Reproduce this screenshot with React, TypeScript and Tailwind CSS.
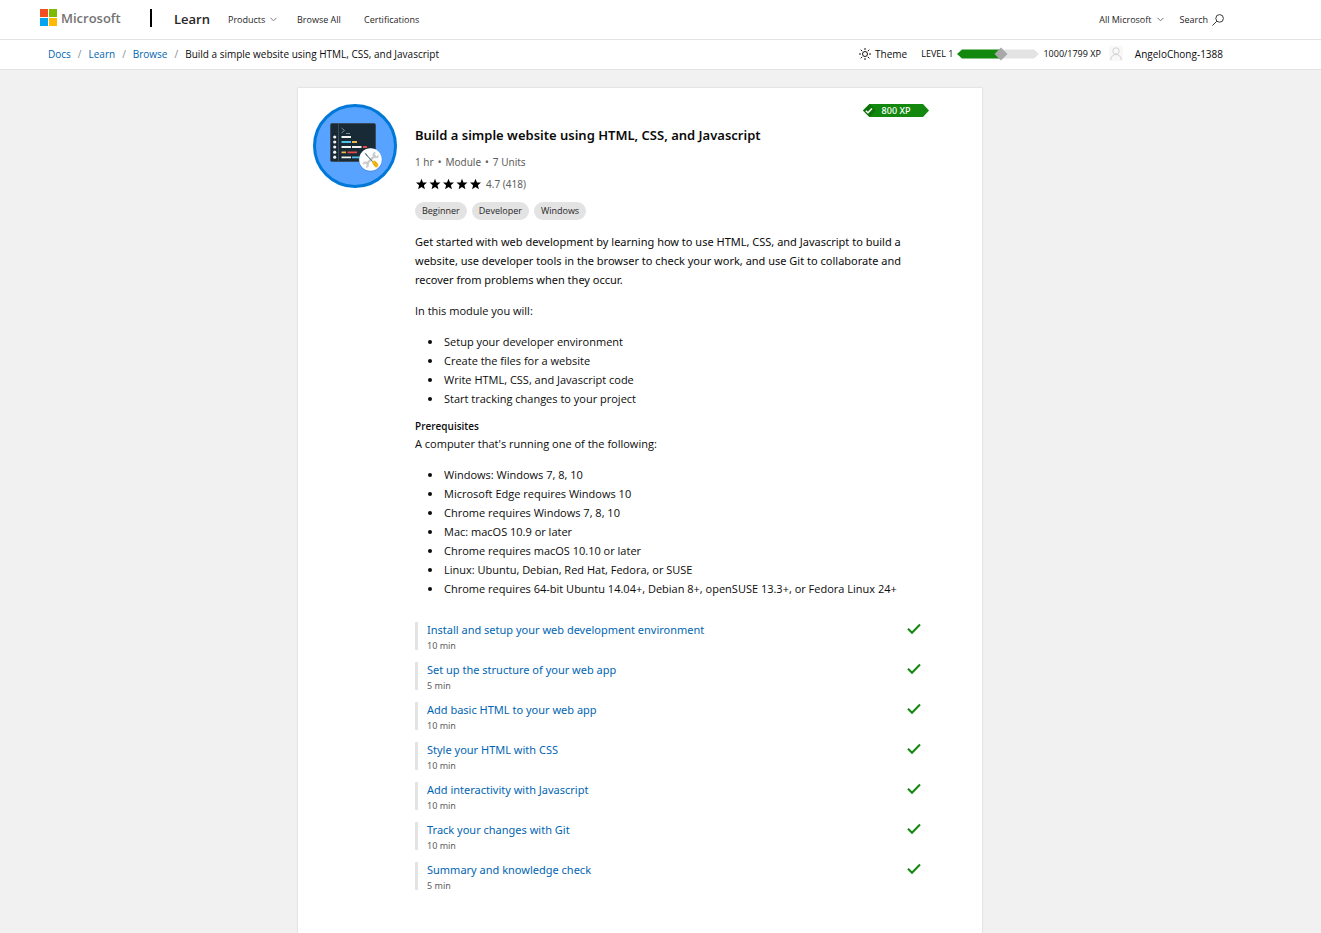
import React from "react";

const outcomes = [
  "Setup your developer environment",
  "Create the files for a website",
  "Write HTML, CSS, and Javascript code",
  "Start tracking changes to your project",
];

const prerequisites = [
  "Windows: Windows 7, 8, 10",
  "Microsoft Edge requires Windows 10",
  "Chrome requires Windows 7, 8, 10",
  "Mac: macOS 10.9 or later",
  "Chrome requires macOS 10.10 or later",
  "Linux: Ubuntu, Debian, Red Hat, Fedora, or SUSE",
  "Chrome requires 64-bit Ubuntu 14.04+, Debian 8+, openSUSE 13.3+, or Fedora Linux 24+",
];

const units = [
  { title: "Install and setup your web development environment", time: "10 min" },
  { title: "Set up the structure of your web app", time: "5 min" },
  { title: "Add basic HTML to your web app", time: "10 min" },
  { title: "Style your HTML with CSS", time: "10 min" },
  { title: "Add interactivity with Javascript", time: "10 min" },
  { title: "Track your changes with Git", time: "10 min" },
  { title: "Summary and knowledge check", time: "5 min" },
];

function Chevron() {
  return (
    <svg width="7" height="5" viewBox="0 0 7 5" fill="none" stroke="#777" aria-hidden="true">
      <path d="M0.5 0.8 3.5 3.8 6.5 0.8" />
    </svg>
  );
}

function SiteHeader() {
  return (
    <header className="border-b border-[#e3e3e3] bg-white">
      <div className="flex h-[39px] w-full max-w-[1280px] items-center pl-10 pr-14 text-[#262626]">
        <a href="#" className="mb-1 flex items-center gap-1" aria-label="Microsoft home">
          <svg width="17" height="17" viewBox="0 0 17 17" aria-hidden="true">
            <path fill="#f25022" d="M0 0h8v8H0z" />
            <path fill="#7fba00" d="M9 0h8v8H9z" />
            <path fill="#00a4ef" d="M0 9h8v8H0z" />
            <path fill="#ffb900" d="M9 9h8v8H9z" />
          </svg>
          <span className="w-[61px] text-[13px] font-semibold leading-4 text-[#737373]">Microsoft</span>
        </a>
        <span className="mb-1 ml-7 h-[18px] w-[2px] bg-black" />
        <a href="#" className="ml-[22px] w-[54px] pb-[2px] text-[13px] font-semibold leading-5">Learn</a>
        <nav className="flex items-center text-[9px] leading-4">
          <button type="button" className="flex w-[69px] items-center gap-[5px]">Products <Chevron /></button>
          <a href="#" className="w-[67px]">Browse All</a>
          <a href="#">Certifications</a>
        </nav>
        <div className="ml-auto flex items-center gap-4 text-[9px] leading-4">
          <button type="button" className="flex items-center gap-[5px]">All Microsoft <Chevron /></button>
          <button type="button" className="flex items-center gap-1">
            Search
            <svg width="12" height="12" viewBox="0 0 12 12" fill="none" stroke="#262626" strokeWidth="0.9" aria-hidden="true">
              <circle cx="7.6" cy="4.4" r="3.8" />
              <path d="M4.8 7.2 0.4 11.6" />
            </svg>
          </button>
        </div>
      </div>
    </header>
  );
}

function XpMeter() {
  return (
    <svg className="ml-1" width="82" height="14" viewBox="0 0 82 14" role="img" aria-label="1000 of 1799 XP">
      <path fill="#e3e3e3" d="M44 2.5h33l5 4.5-5 4.5H44z" />
      <path fill="#13880f" d="M5 2.5h39v9H5L0 7z" />
      <path fill="#a8a8a8" d="M44 0.5 50.5 7 44 13.5 37.5 7z" />
    </svg>
  );
}

function SubHeader() {
  return (
    <div className="border-b border-[#e3e3e3] bg-white">
      <div className="flex h-[29px] w-full max-w-[1280px] items-center pb-[2px] pl-12 pr-[57px] text-[10px] leading-4">
        <nav aria-label="Breadcrumb">
          <ol className="flex items-center gap-[7px]">
            <li><a href="#" className="text-[#0065b3]">Docs</a></li>
            <li className="text-[#8a8a8a]" aria-hidden="true">/</li>
            <li><a href="#" className="text-[#0065b3]">Learn</a></li>
            <li className="text-[#8a8a8a]" aria-hidden="true">/</li>
            <li><a href="#" className="text-[#0065b3]">Browse</a></li>
            <li className="text-[#8a8a8a]" aria-hidden="true">/</li>
            <li>Build a simple website using HTML, CSS, and Javascript</li>
          </ol>
        </nav>
        <div className="ml-auto flex items-center">
          <button type="button" className="flex items-center gap-1">
            <svg width="12" height="12" viewBox="0 0 12 12" fill="none" stroke="#171717" aria-hidden="true">
              <circle cx="6" cy="6" r="2.5" />
              <path d="M6 0v2M6 10v2M0 6h2M10 6h2M1.7 1.7l1.5 1.5M8.8 8.8l1.5 1.5M1.7 10.3l1.5-1.5M8.8 3.2l1.5-1.5" />
            </svg>
            Theme
          </button>
          <span className="ml-[14px] text-[9px]">LEVEL 1</span>
          <XpMeter />
          <span className="ml-1 text-[9px]">1000/1799 XP</span>
          <svg className="ml-2" width="14" height="15" viewBox="0 0 14 15" fill="none" aria-hidden="true">
            <path fill="#f8f8f8" d="M0 0h14v15H0z" />
            <circle cx="7" cy="5" r="3.2" stroke="#d2d2d2" />
            <path stroke="#d2d2d2" d="M1.8 14c0-3.5 2.2-5.5 5.2-5.5s5.2 2 5.2 5.5" />
          </svg>
          <a href="#" className="ml-3">AngeloChong-1388</a>
        </div>
      </div>
    </div>
  );
}

function ModuleBadge() {
  return (
    <svg className="shrink-0" width="84" height="84" viewBox="0 0 84 84" aria-hidden="true">
      <circle cx="42" cy="42" r="40.5" fill="#57a3ff" stroke="#0078d7" strokeWidth="3" />
      <rect x="17.5" y="19.5" width="45" height="38" rx="1.5" fill="#182a35" stroke="#3b4b59" />
      <path stroke="#3b4b59" d="M25.5 20v37" />
      <path fill="none" stroke="#7a8790" d="M28.5 24l3 2.5-3 2.5M33 29.5h4" />
      <g fill="#f2f2f2">
        <circle cx="21.7" cy="33" r="1.6" />
        <circle cx="21.7" cy="38" r="1.6" />
        <circle cx="21.7" cy="43" r="1.6" />
        <circle cx="21.7" cy="48.2" r="1.6" />
        <circle cx="21.7" cy="53.2" r="1.6" />
      </g>
      <g fill="none" strokeWidth="1.8">
        <path stroke="#f2f2f2" d="M28.5 33H38M28.5 43H38M39 43h9.5M28.5 53.3H38" />
        <path stroke="#50c1e8" d="M28.5 38H38M39 53.3h8" />
        <path stroke="#f0b64a" d="M39 38h5M28.5 48.3h4.5" />
        <path stroke="#e8484a" d="M50 43h4M34.5 48.3H44" />
      </g>
      <circle cx="57.5" cy="56" r="11.8" fill="#2f79ca" opacity="0.5" />
      <circle cx="57.5" cy="55.5" r="11.3" fill="#fff" />
      <path stroke="#c9cbcd" strokeWidth="2.4" d="M53 60.5 62.5 51" />
      <path fill="none" stroke="#c9cbcd" strokeWidth="1.8" d="M50.3 60.3a2.4 2.4 0 1 1 2.8 2.8M65.2 51.5a2.4 2.4 0 1 1-2.8-2.8" />
      <path stroke="#5b7480" strokeWidth="1.1" d="M53.5 51 60 58" />
      <path fill="#5b7480" d="M51.2 48.5l2.7 1.5.8 2.2-1.5-.6z" />
      <path stroke="#f6b917" strokeWidth="4.2" strokeLinecap="round" d="M61.3 58.7 63.3 61.3" />
      <path stroke="#c98c07" strokeWidth="0.7" d="M60.6 59.8 62.4 62M62.3 58.3l1.9 2.3" />
    </svg>
  );
}

function XpTag() {
  return (
    <div className="ml-auto grid h-[13px] w-[66px] items-center">
      <svg className="col-start-1 row-start-1" width="66" height="13" viewBox="0 0 66 13" aria-hidden="true">
        <path fill="#13880f" d="M6.5 0H60l6 6.5L60 13H6.5L0 6.5z" />
        <path fill="#0d730b" d="M6.5 0 13 6.5 6.5 13 0 6.5z" />
        <path fill="none" stroke="#fff" strokeWidth="1.5" d="M2.8 6.8 5 8.8 9 4.5" />
      </svg>
      <span className="col-start-1 row-start-1 text-center text-[9px] font-medium leading-[13px] text-white">800 XP</span>
    </div>
  );
}

function Rating() {
  return (
    <div className="mt-1 flex h-[18px] items-center pl-px">
      <svg width="66" height="12" viewBox="0 0 66 12" role="img" aria-label="4.7 out of 5 stars">
        {[0, 1, 2, 3, 4].map((n) => (
          <path
            key={n}
            transform={`translate(${n * 13.5} 0)`}
            d="M5.5 0.7 7 4.4 11 4.6 7.9 7.2 8.9 11.2 5.5 9 2.1 11.2 3.1 7.2 0 4.6 4 4.4z"
          />
        ))}
      </svg>
      <span className="ml-1 text-[10px] text-[#5e5e5e]">4.7 (418)</span>
    </div>
  );
}

function BulletList({ items }: { items: string[] }) {
  return (
    <ul className="mt-3 list-disc pl-7">
      {items.map((item) => (
        <li key={item} className="pl-px">{item}</li>
      ))}
    </ul>
  );
}

export default function App() {
  return (
    <div className="flex min-h-screen flex-col bg-[#f1f1f1] font-['Open_Sans','Noto_Sans',sans-serif] text-[#0b0b0b]">
      <SiteHeader />
      <SubHeader />
      <div className="flex w-full max-w-[1280px] grow justify-center pt-[18px]">
        <main className="flex w-[684px] items-start gap-[18px] bg-white px-[15px] pb-10 pt-4 shadow-[0_0_2px_rgba(0,0,0,0.15)]">
          <ModuleBadge />
          <article className="w-[514px] font-['Noto_Sans','Open_Sans',sans-serif] text-[11px] leading-[19px]">
            <XpTag />
            <h1 className="mt-2 text-[13px] font-semibold leading-5">
              Build a simple website using HTML, CSS, and Javascript
            </h1>
            <p className="mt-2 flex gap-1 text-[10px] leading-[18px] text-[#5e5e5e]">
              <span>1 hr</span>
              <span>•</span>
              <span>Module</span>
              <span>•</span>
              <span>7 Units</span>
            </p>
            <Rating />
            <ul className="mt-[9px] flex gap-[5px] font-['Open_Sans','Noto_Sans',sans-serif] text-[9px] leading-[18px] text-[#262626]">
              {["Beginner", "Developer", "Windows"].map((tag) => (
                <li key={tag} className="rounded-full bg-[#e3e3e3] px-[7px]">{tag}</li>
              ))}
            </ul>
            <p className="mt-3">
              Get started with web development by learning how to use HTML, CSS, and Javascript to build a website, use
              developer tools in the browser to check your work, and use Git to collaborate and recover from problems
              when they occur.
            </p>
            <div className="font-['Open_Sans','Noto_Sans',sans-serif]">
              <p className="mt-3">In this module you will:</p>
              <BulletList items={outcomes} />
              <h2 className="mt-[10px] text-[10px] font-semibold leading-4">Prerequisites</h2>
              <p>A computer that's running one of the following:</p>
              <BulletList items={prerequisites} />
            </div>
            <ol className="mt-6 flex flex-col gap-3">
              {units.map((unit) => (
                <li key={unit.title} className="flex h-7 justify-between border-l-3 border-[#e3e3e3] pl-[9px] pr-2">
                  <div>
                    <a href="#" className="block leading-4 text-[#0065b3]">{unit.title}</a>
                    <p className="text-[9px] leading-4 text-[#5e5e5e]">{unit.time}</p>
                  </div>
                  <svg className="mt-px" width="14" height="12" viewBox="0 0 14 12" fill="none" role="img" aria-label="Completed">
                    <path stroke="#13880f" strokeWidth="2" d="M1 5.8 5 9.8 13 1.5" />
                  </svg>
                </li>
              ))}
            </ol>
          </article>
        </main>
      </div>
    </div>
  );
}
